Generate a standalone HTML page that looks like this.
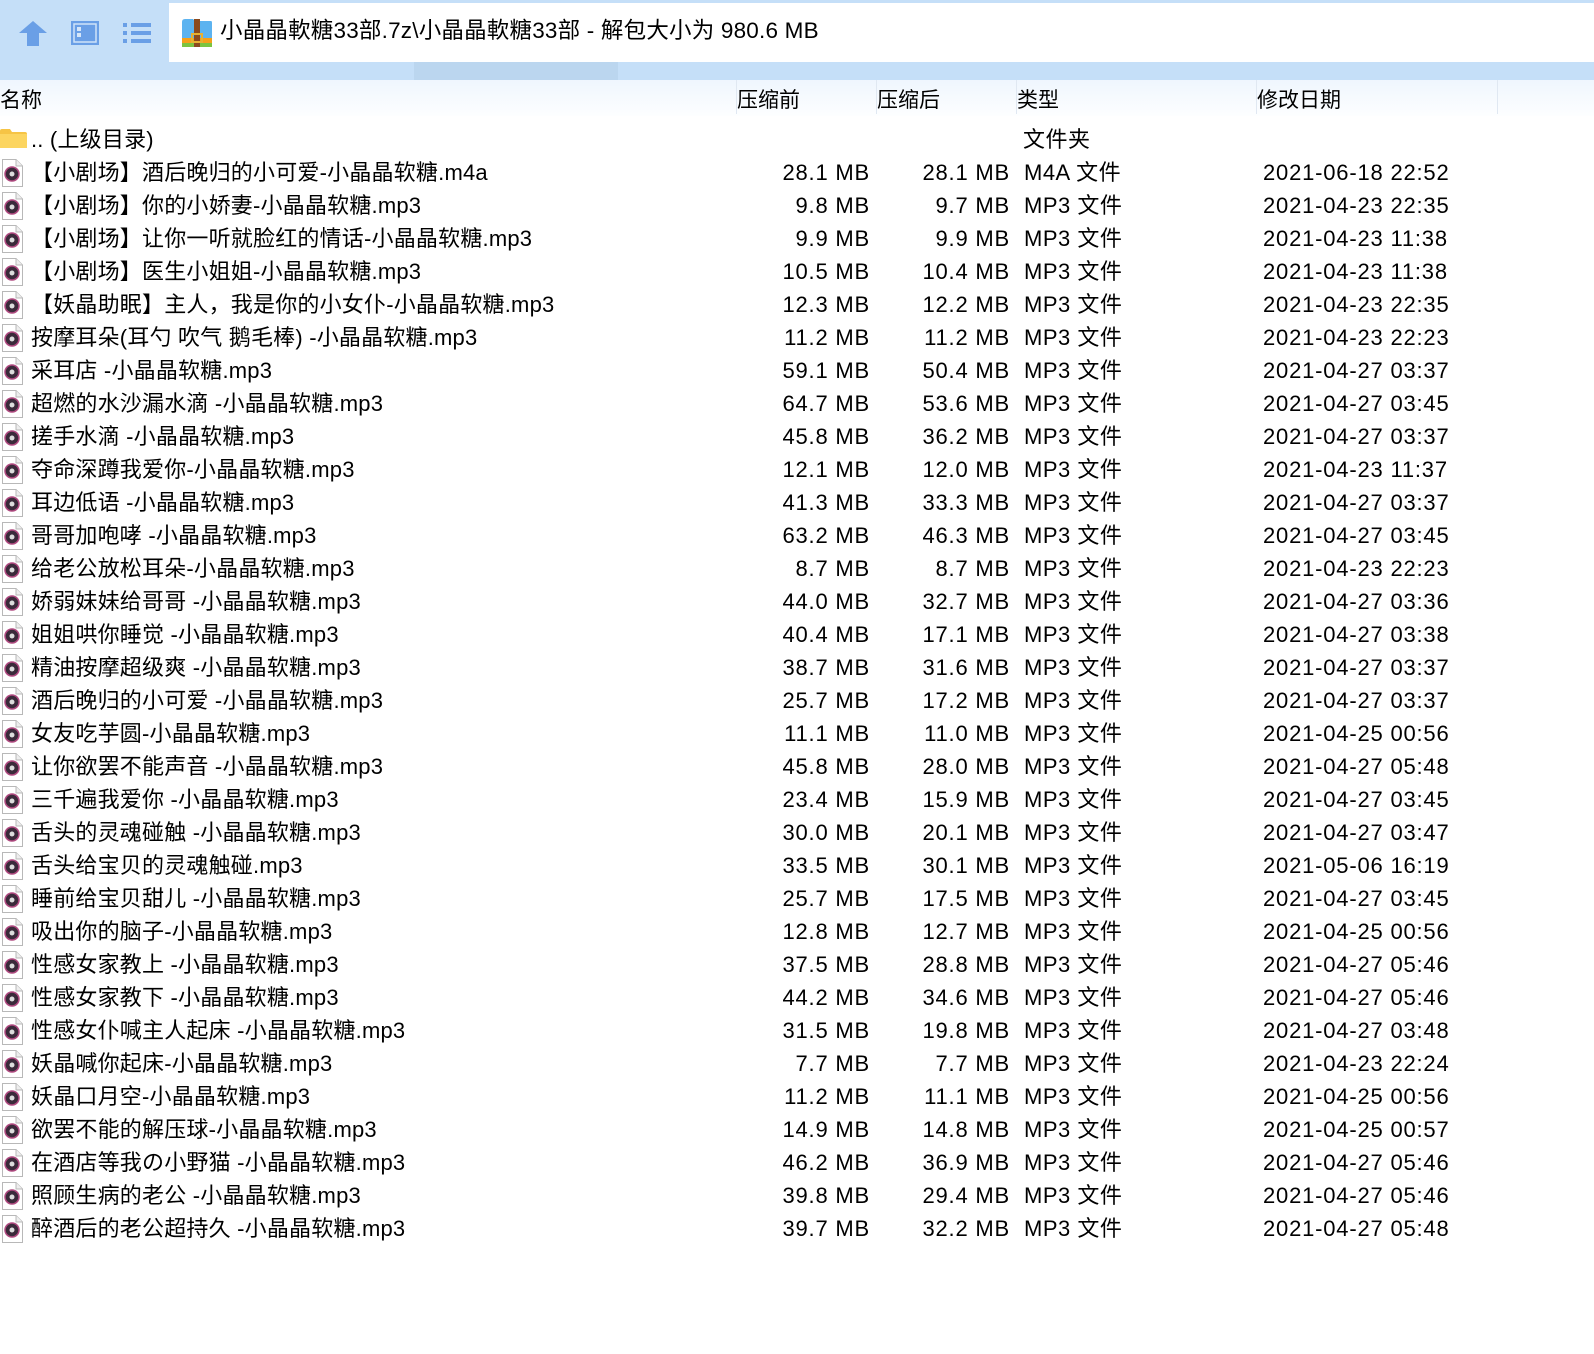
<!DOCTYPE html>
<html><head><meta charset="utf-8"><style>
*{margin:0;padding:0;box-sizing:border-box}
body{width:1594px;height:1354px;background:#fff;position:relative;overflow:hidden;font-family:"Liberation Sans","Noto Sans CJK SC",sans-serif;color:#000}
.tb{position:absolute;left:0;top:0;width:1594px;height:80px;background:#c5dff8}
.addr{position:absolute;left:169px;top:3px;width:1425px;height:59px;background:#fff}
.seg{position:absolute;left:414px;top:62px;width:204px;height:18px;background:#bbd6ef}
.title{position:absolute;left:220px;top:15px;font-size:22.5px;line-height:32px;white-space:nowrap;letter-spacing:0.2px}
.hdr{position:absolute;left:0;top:80px;width:1594px;height:36px;background:linear-gradient(#eff6fe,#fdfeff)}
.hdr span{position:absolute;top:5px;font-size:21px;line-height:32px}
.sep{position:absolute;top:80px;width:1px;height:34px;background:#e0e8f2}
.r{position:absolute;left:0;width:1594px;height:33px;font-size:22px;line-height:33px;white-space:nowrap}
.r .n{position:absolute;left:31px;letter-spacing:0.2px}
.r .a{position:absolute;right:724px;letter-spacing:0.8px}
.r .b{position:absolute;right:584px;letter-spacing:0.8px}
.r .t{position:absolute;left:1024px;letter-spacing:0.5px}
.r .d{position:absolute;left:1263px;letter-spacing:0.8px}
.ic{position:absolute;left:2px;top:3px}
</style></head><body>
<div class="tb"></div>
<div class="seg"></div>
<svg style="position:absolute;left:19px;top:21px" width="28" height="25"><path d="M14 0 L28 12 L20 12 L20 25 L8 25 L8 12 L0 12 Z" fill="#6a9fe6"/></svg>
<svg style="position:absolute;left:71px;top:21px" width="28" height="24"><rect x="1.5" y="1.5" width="25" height="21" fill="#6a9fe6" stroke="#6a9fe6" stroke-width="3"/><rect x="3" y="3" width="22" height="18" fill="#6a9fe6" stroke="#cfe3f8" stroke-width="1.5"/><rect x="6" y="6" width="4" height="4" fill="#d5e6f9"/><rect x="6" y="12" width="4" height="4" fill="#d5e6f9"/></svg>
<svg style="position:absolute;left:123px;top:23px" width="28" height="20"><g fill="#6a9fe6"><rect x="0" y="0" width="4" height="4"/><rect x="8" y="0" width="20" height="4"/><rect x="0" y="8" width="4" height="4"/><rect x="8" y="8" width="20" height="4"/><rect x="0" y="16" width="4" height="4"/><rect x="8" y="16" width="20" height="4"/></g></svg>
<div class="addr"></div>
<svg style="position:absolute;left:181px;top:18px" width="32" height="30"><path d="M1 4 Q1 1 4 1 L12 1 L14 3 L30 3 Q31 3 31 5 L31 22 L1 22 Z" fill="#5cb3f0"/><rect x="1" y="20" width="30" height="5" fill="#f5a01a"/><rect x="1" y="25" width="30" height="4" fill="#7cc440"/><rect x="13" y="1" width="6" height="28" fill="#8b4a1e"/><rect x="11" y="16" width="10" height="8" fill="none" stroke="#e8b030" stroke-width="2"/></svg>
<div class="title">小晶晶軟糖33部.7z\小晶晶軟糖33部 - 解包大小为 980.6 MB</div>
<div class="hdr"><span style="left:0">名称</span><span style="left:737px">压缩前</span><span style="left:877px">压缩后</span><span style="left:1017px">类型</span><span style="left:1257px">修改日期</span></div>
<div class="sep" style="left:736px"></div><div class="sep" style="left:876px"></div><div class="sep" style="left:1016px"></div><div class="sep" style="left:1256px"></div><div class="sep" style="left:1497px"></div>
<div class="r" style="top:123px"><svg style="position:absolute;left:0;top:6px" width="27" height="19"><path d="M0 2 Q0 0 2 0 L10 0 L12 3 L25 3 Q27 3 27 5 L27 19 L0 19 Z" fill="#f6c445"/><rect x="0" y="5" width="27" height="14" fill="#fcd560"/></svg><span class="n">.. (上级目录)</span><span class="t" style="left:1023px">文件夹</span></div>
<div id="rows"></div>
<script>
var d=[["【小剧场】酒后晚归的小可爱-小晶晶软糖.m4a","28.1","28.1","M4A","2021-06-18 22:52"],
["【小剧场】你的小娇妻-小晶晶软糖.mp3","9.8","9.7","MP3","2021-04-23 22:35"],
["【小剧场】让你一听就脸红的情话-小晶晶软糖.mp3","9.9","9.9","MP3","2021-04-23 11:38"],
["【小剧场】医生小姐姐-小晶晶软糖.mp3","10.5","10.4","MP3","2021-04-23 11:38"],
["【妖晶助眠】主人，我是你的小女仆-小晶晶软糖.mp3","12.3","12.2","MP3","2021-04-23 22:35"],
["按摩耳朵(耳勺 吹气 鹅毛棒) -小晶晶软糖.mp3","11.2","11.2","MP3","2021-04-23 22:23"],
["采耳店 -小晶晶软糖.mp3","59.1","50.4","MP3","2021-04-27 03:37"],
["超燃的水沙漏水滴 -小晶晶软糖.mp3","64.7","53.6","MP3","2021-04-27 03:45"],
["搓手水滴 -小晶晶软糖.mp3","45.8","36.2","MP3","2021-04-27 03:37"],
["夺命深蹲我爱你-小晶晶软糖.mp3","12.1","12.0","MP3","2021-04-23 11:37"],
["耳边低语 -小晶晶软糖.mp3","41.3","33.3","MP3","2021-04-27 03:37"],
["哥哥加咆哮 -小晶晶软糖.mp3","63.2","46.3","MP3","2021-04-27 03:45"],
["给老公放松耳朵-小晶晶软糖.mp3","8.7","8.7","MP3","2021-04-23 22:23"],
["娇弱妹妹给哥哥 -小晶晶软糖.mp3","44.0","32.7","MP3","2021-04-27 03:36"],
["姐姐哄你睡觉 -小晶晶软糖.mp3","40.4","17.1","MP3","2021-04-27 03:38"],
["精油按摩超级爽 -小晶晶软糖.mp3","38.7","31.6","MP3","2021-04-27 03:37"],
["酒后晚归的小可爱 -小晶晶软糖.mp3","25.7","17.2","MP3","2021-04-27 03:37"],
["女友吃芋圆-小晶晶软糖.mp3","11.1","11.0","MP3","2021-04-25 00:56"],
["让你欲罢不能声音 -小晶晶软糖.mp3","45.8","28.0","MP3","2021-04-27 05:48"],
["三千遍我爱你 -小晶晶软糖.mp3","23.4","15.9","MP3","2021-04-27 03:45"],
["舌头的灵魂碰触 -小晶晶软糖.mp3","30.0","20.1","MP3","2021-04-27 03:47"],
["舌头给宝贝的灵魂触碰.mp3","33.5","30.1","MP3","2021-05-06 16:19"],
["睡前给宝贝甜儿 -小晶晶软糖.mp3","25.7","17.5","MP3","2021-04-27 03:45"],
["吸出你的脑子-小晶晶软糖.mp3","12.8","12.7","MP3","2021-04-25 00:56"],
["性感女家教上 -小晶晶软糖.mp3","37.5","28.8","MP3","2021-04-27 05:46"],
["性感女家教下 -小晶晶软糖.mp3","44.2","34.6","MP3","2021-04-27 05:46"],
["性感女仆喊主人起床 -小晶晶软糖.mp3","31.5","19.8","MP3","2021-04-27 03:48"],
["妖晶喊你起床-小晶晶软糖.mp3","7.7","7.7","MP3","2021-04-23 22:24"],
["妖晶口月空-小晶晶软糖.mp3","11.2","11.1","MP3","2021-04-25 00:56"],
["欲罢不能的解压球-小晶晶软糖.mp3","14.9","14.8","MP3","2021-04-25 00:57"],
["在酒店等我の小野猫 -小晶晶软糖.mp3","46.2","36.9","MP3","2021-04-27 05:46"],
["照顾生病的老公 -小晶晶软糖.mp3","39.8","29.4","MP3","2021-04-27 05:46"],
["醉酒后的老公超持久 -小晶晶软糖.mp3","39.7","32.2","MP3","2021-04-27 05:48"]];
var ic='<svg class="ic" width="21" height="28"><path d="M0.5 0.5 L14 0.5 L20.5 7 L20.5 27.5 L0.5 27.5 Z" fill="#fff" stroke="#b8b8b8"/><path d="M14 0.5 L14 7 L20.5 7" fill="#eee" stroke="#b8b8b8"/><circle cx="10" cy="15" r="7" fill="#3a2a3a"/><circle cx="10" cy="15" r="7" fill="none" stroke="#b04a80" stroke-width="1.5"/><circle cx="10" cy="15" r="2.5" fill="#ddd"/></svg>';
var h='';
for(var i=0;i<d.length;i++){var r=d[i];
h+='<div class="r" style="top:'+(156+i*33)+'px">'+ic+'<span class="n">'+r[0]+'</span><span class="a">'+r[1]+' MB</span><span class="b">'+r[2]+' MB</span><span class="t">'+r[3]+' 文件</span><span class="d">'+r[4]+'</span></div>';}
document.getElementById('rows').innerHTML=h;
</script>
</body></html>
